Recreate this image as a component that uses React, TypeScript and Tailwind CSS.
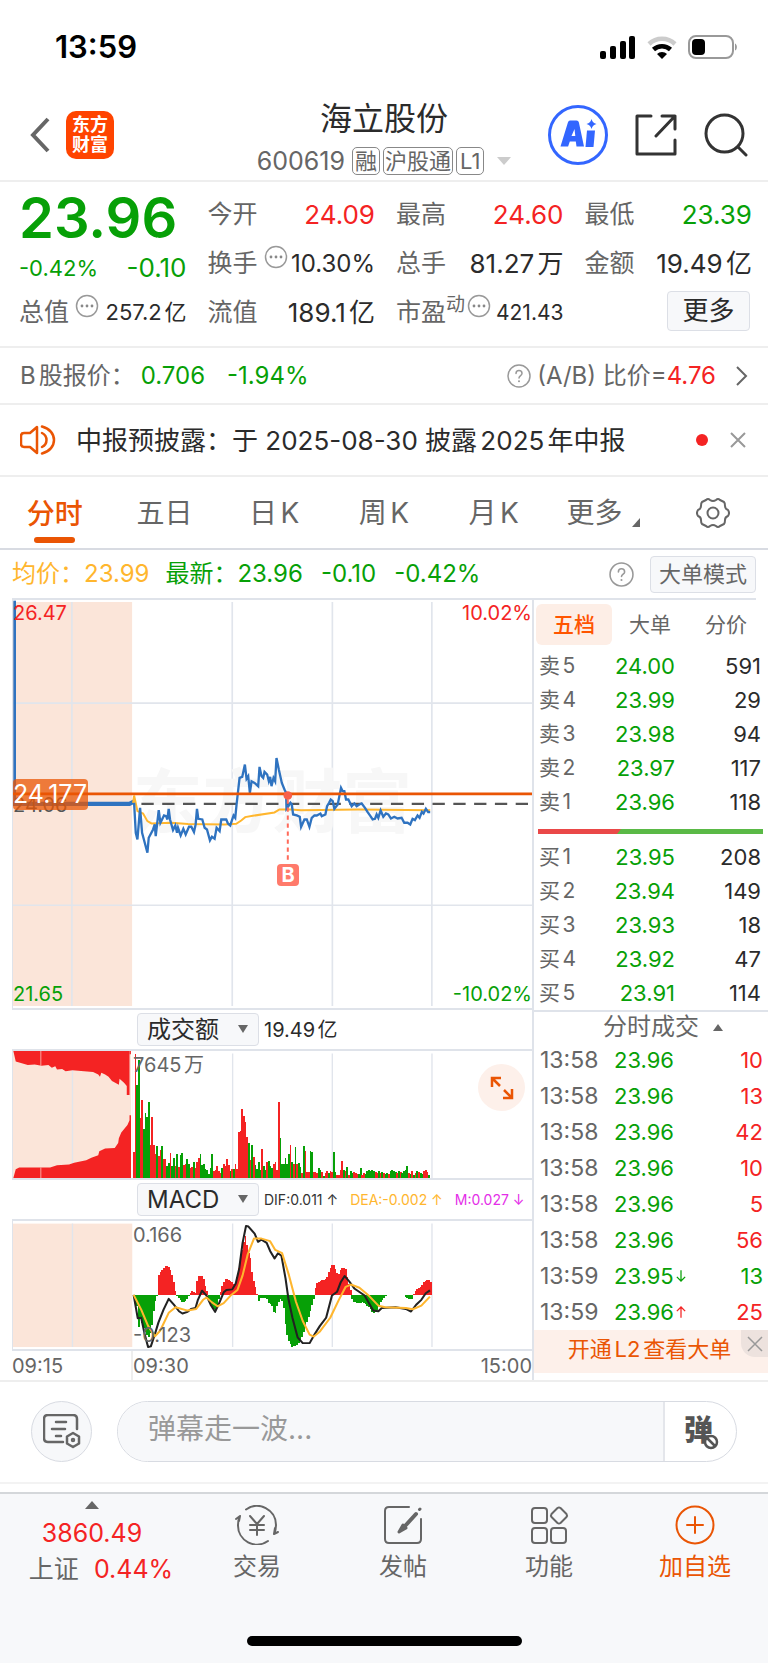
import type { ReactNode } from "react";

const asks = [
  ["卖5", "24.00", "591"],
  ["卖4", "23.99", "29"],
  ["卖3", "23.98", "94"],
  ["卖2", "23.97", "117"],
  ["卖1", "23.96", "118"],
];

const bids = [
  ["买1", "23.95", "208"],
  ["买2", "23.94", "149"],
  ["买3", "23.93", "18"],
  ["买4", "23.92", "47"],
  ["买5", "23.91", "114"],
];

const trades = [
  { time: "13:58", price: "23.96", vol: "10", side: "buy" },
  { time: "13:58", price: "23.96", vol: "13", side: "buy" },
  { time: "13:58", price: "23.96", vol: "42", side: "buy" },
  { time: "13:58", price: "23.96", vol: "10", side: "buy" },
  { time: "13:58", price: "23.96", vol: "5", side: "buy" },
  { time: "13:58", price: "23.96", vol: "56", side: "buy" },
  { time: "13:59", price: "23.95", vol: "13", side: "sell", arrow: "down" },
  { time: "13:59", price: "23.96", vol: "25", side: "buy", arrow: "up" },
];

const priceLine =
  "28,190 33,280 38,300 46,205 52,280 60,310 68,340 72,295 85,270 90,255 93,290 102,212 107,250 118,228 124,230 128,240 132,208 136,240 145,272 152,258 157,280 160,265 168,288 176,268 183,285 193,262 200,262 208,278 213,255 217,208 221,238 233,240 240,265 247,270 256,303 262,292 270,298 276,265 285,275 290,240 305,240 310,252 317,258 323,240 327,228 332,235 336,195 345,115 353,112 361,75 366,118 371,110 376,160 381,125 390,130 401,140 405,82 411,110 416,115 420,97 428,105 433,125 437,112 441,140 447,115 452,125 456,55 463,90 472,130 480,150 485,160 486,208 492,200 498,190 502,195 506,225 517,228 526,232 530,262 540,240 547,240 555,262 562,235 570,228 577,228 588,222 592,230 603,225 608,200 614,190 619,180 625,185 630,208 640,195 650,145 655,155 660,155 665,180 672,180 682,200 690,192 697,200 705,195 712,192 722,205 730,218 740,232 745,240 752,238 757,225 762,235 769,213 777,232 785,222 792,225 800,237 810,232 820,237 832,235 840,250 850,250 858,255 865,238 872,242 880,228 886,235 893,217 898,222 905,208 912,218 918,218";

const averageLine =
  "25,190 28,168 38,215 55,222 68,245 80,252 140,250 190,254 300,255 335,253 350,243 362,233 385,229 450,219 465,210 500,210 530,212 700,210 918,212";

// one entry per minute: r = up, g = down, followed by the bar height
const volumes =
  "r80 r381 g285 g360 r185 r240 g150 g198 g187 g232 r100 r188 r100 r75 g98 r68 r85 g98 r57 r57 g38 g45 r78 g38 g62 r36 g74 r34 g70 g78 r40 r43 g58 g42 r30 r34 g50 r30 r50 r62 g74 g40 g44 g28 g26 g12 g30 g72 r22 r24 r36 r20 r14 g30 r42 r38 r57 r40 g22 r28 g28 r42 r28 r140 r143 r210 r190 r170 r126 g106 r56 g102 r65 g40 g28 g50 g25 r88 g38 g24 r50 g52 g38 g30 r44 r50 r24 r234 g122 g42 g42 g60 g44 g74 r100 g48 r42 g95 r42 g46 g34 r14 g98 r82 r18 r18 g82 g80 r18 r18 r16 g30 g24 r18 g6 r14 r20 g14 r20 r18 g80 g18 r10 r10 r24 r52 g26 r20 g34 r10 g22 g16 r18 r14 r12 g12 g30 r8 r14 g12 g20 g24 g22 g24 g22 r18 r14 g20 r14 g18 r14 g12 g16 r12 g20 g24 g22 g18 r16 g20 r18 g16 g20 g26 g38 r16 g12 r22 g10 r14 g20 r18 g16 g12 r22 r24 r18 g10".split(
    " "
  );

const macdOutline: [number, number][] = [
  [386, 360], [400, 400], [402, 465], [408, 430], [420, 470], [432, 490], [440, 470], [445, 420], [450, 385], [457, 360],
  [460, 300], [470, 285], [480, 270], [493, 275], [500, 300], [505, 320], [512, 360], [525, 375], [532, 385], [545, 370],
  [550, 360], [558, 348], [568, 355], [572, 320], [578, 302], [590, 300], [595, 325], [602, 350], [605, 365], [612, 390],
  [625, 408], [632, 395], [637, 365], [642, 345], [648, 325], [655, 310], [668, 315], [678, 325], [685, 330], [690, 300],
  [700, 240], [712, 178], [716, 178], [720, 230], [727, 235], [731, 280], [738, 320], [745, 345], [749, 366], [753, 383],
  [757, 370], [775, 368], [782, 385], [790, 390], [797, 418], [803, 412], [807, 385], [818, 370], [825, 400], [832, 470],
  [838, 500], [850, 520], [862, 515], [872, 505], [885, 470], [900, 420], [912, 375], [916, 345], [920, 325], [930, 318],
  [950, 310], [955, 290], [965, 268], [972, 270], [978, 290], [985, 295], [993, 277], [1005, 280], [1010, 310], [1019, 345],
  [1023, 370], [1028, 380], [1040, 387], [1055, 382], [1070, 395], [1085, 415], [1095, 410], [1105, 385], [1115, 370], [1125, 360],
  [1175, 361], [1185, 372], [1198, 373], [1203, 358], [1210, 342], [1225, 335], [1232, 322], [1243, 312], [1257, 325],
];

const difLine =
  "388,360 400,432 410,430 420,480 430,520 438,518 450,480 460,445 475,405 490,372 505,390 520,410 530,417 545,412 555,403 568,400 575,375 587,347 600,362 612,390 625,412 635,390 650,352 658,345 675,343 685,325 695,280 705,200 715,148 722,150 740,172 750,197 760,190 775,200 785,225 798,248 808,232 818,240 830,310 838,370 850,430 865,490 880,508 900,508 915,480 930,455 948,430 965,362 980,350 990,322 1002,302 1015,318 1030,340 1060,362 1085,408 1100,410 1110,400 1150,398 1180,403 1195,411 1210,390 1225,375 1238,355 1250,346";

const deaLine =
  "388,360 410,405 430,455 450,487 465,470 490,415 510,398 545,408 570,403 590,375 600,368 615,382 632,395 650,385 670,362 690,345 705,300 720,235 738,187 760,187 785,195 800,222 820,232 840,300 860,380 880,440 900,482 912,488 930,472 960,430 985,375 1005,335 1020,328 1045,338 1070,360 1100,393 1120,398 1180,400 1200,404 1225,393 1250,365";

const BAR = 4.85;

function macdAt(x: number) {
  for (let i = 1; i < macdOutline.length; i++) {
    const [x0, y0] = macdOutline[i - 1];
    const [x1, y1] = macdOutline[i];
    if (x <= x1) return y0 + ((y1 - y0) * (x - x0)) / (x1 - x0);
  }
  return 360;
}

function Dots({ className = "" }: { className?: string }) {
  return (
    <svg viewBox="0 0 24 24" className={`h-6 w-6 shrink-0 self-start ${className}`} fill="none" stroke="#999" strokeWidth="1.5">
      <circle cx="12" cy="12" r="10.5" />
      <g fill="#888" stroke="none">
        <circle cx="7" cy="12" r="1.4" />
        <circle cx="12" cy="12" r="1.4" />
        <circle cx="17" cy="12" r="1.4" />
      </g>
    </svg>
  );
}

function Help({ className }: { className: string }) {
  return (
    <svg viewBox="0 0 24 24" className={className} fill="none" stroke="#999" strokeWidth="1.5">
      <circle cx="12" cy="12" r="11" />
      <path d="M9 9.5c0-4 6-4 6 0 0 2-3 2.200-3 4.500" strokeLinecap="round" />
      <circle cx="12" cy="17.200" r="1" fill="#999" stroke="none" />
    </svg>
  );
}

function Stat({ label, icon, value, color = "text-[#2b2b2b]", size = "text-[26px]" }: {
  label: ReactNode;
  icon?: ReactNode;
  value: string;
  color?: string;
  size?: string;
}) {
  return (
    <div className="flex h-[49px] items-center justify-between whitespace-nowrap">
      <div className="flex items-center text-[25px] text-[#666]">
        <span>{label}</span>
        {icon}
      </div>
      <span className={`${size} ${color}`}>{value}</span>
    </div>
  );
}

function Header() {
  return (
    <header className="border-b-2 border-[#eee]">
      <div className="flex h-[90px] items-center justify-between pt-1 pr-[30px] pl-[55px]">
        <span className="text-[31px] font-semibold text-black">13:59</span>
        <div className="flex items-center gap-[11px]">
          <svg viewBox="0 0 36 23" className="h-[23px] w-9">
            <rect x="0" y="15" width="6" height="8" rx="2" />
            <rect x="10" y="10" width="6" height="13" rx="2" />
            <rect x="20" y="5" width="6" height="18" rx="2" />
            <rect x="29" y="0" width="6" height="23" rx="2" />
          </svg>
          <svg viewBox="0 0 30 23" className="h-[23px] w-[30px]" fill="none" strokeWidth="4.500">
            <path d="M2 8a19 19 0 0 1 26 0" stroke="#ccc" />
            <path d="M6.500 13.500a12.500 12.500 0 0 1 17 0" stroke="#000" />
            <path d="M10 18a7 7 0 0 1 10 0l-5 5z" fill="#000" stroke="none" />
          </svg>
          <svg viewBox="0 0 50 24" className="h-6 w-[50px]" fill="none">
            <rect x="1" y="1" width="44" height="22" rx="7" stroke="#999" strokeWidth="2" />
            <rect x="4" y="4" width="13" height="16" rx="4" fill="#000" />
            <path d="M47 8.500c2.500 1 2.500 6 0 7z" fill="#999" />
          </svg>
        </div>
      </div>
      <div className="flex h-[90px] items-center px-5">
        <div className="flex flex-1 items-center gap-4">
          <button aria-label="返回" className="ml-[10px]">
            <svg viewBox="0 0 20 36" className="h-9 w-5" fill="none" stroke="#666" strokeWidth="4">
              <path d="M18 2L3 18l15 16" />
            </svg>
          </button>
          <div className="flex h-12 w-12 flex-col items-center justify-center rounded-[10px] bg-[#ff4400] text-[18px] leading-5 font-bold text-white">
            <span>东方</span>
            <span>财富</span>
          </div>
        </div>
        <div className="flex flex-col items-center pt-1">
          <h1 className="text-[32px] leading-10 text-[#2b2b2b]">海立股份</h1>
          <div className="mt-2 flex items-center gap-[3px] text-[22px] leading-[26px] text-[#666]">
            <span className="mr-1 text-[25px]">600619</span>
            <span className="rounded-[5px] border border-[#888] px-[2px]">融</span>
            <span className="rounded-[5px] border border-[#888] px-[1px]">沪股通</span>
            <span className="rounded-[5px] border border-[#888] px-[3px]">L1</span>
            <svg viewBox="0 0 14 8" className="ml-[10px] h-2 w-[14px]" fill="#ccc">
              <path d="M0 0h14L7 8z" />
            </svg>
          </div>
        </div>
        <div className="flex flex-1 items-center justify-end gap-[27px]">
          <button aria-label="Ai">
            <svg viewBox="0 0 60 60" className="h-[60px] w-[60px]" fill="none">
              <circle cx="30" cy="30" r="28.500" stroke="#3366ff" strokeWidth="3" />
              <path d="M22 15.500h6.500q2 0 2.400 2L36 41.500h-7.500l-.7-5h-6l-1.700 5H12.500l7.400-24q.6-2 2.100-2zM23.500 31h3.800l-.8-7z" fill="#3366ff" fillRule="evenodd" />
              <path d="M39 25.500h8l-1.500 16.500h-8z" fill="#3366ff" />
              <path d="M43.500 14c1 3 2 4 5 5-3 1-4 2-5 5-1-3-2-4-5-5 3-1 4-2 5-5z" fill="#3366ff" />
            </svg>
          </button>
          <button aria-label="分享">
            <svg viewBox="0 0 42 42" className="h-[42px] w-[42px]" fill="none" stroke="#333" strokeWidth="3" strokeLinejoin="round" strokeLinecap="round">
              <path d="M16 2H2v38h38V26M27 2h13v13M40 2L21 22" />
            </svg>
          </button>
          <button aria-label="搜索">
            <svg viewBox="0 0 44 44" className="h-11 w-11" fill="none" stroke="#333" strokeWidth="3" strokeLinecap="round">
              <circle cx="20.500" cy="20.500" r="18.500" />
              <path d="M34 34l8 8" />
            </svg>
          </button>
        </div>
      </div>
    </header>
  );
}

function Quote() {
  return (
    <section className="grid h-[166px] grid-cols-4 gap-x-[21px] border-b-2 border-[#eee] pt-2 pr-4 pl-[19px]">
      <div>
        <div className="flex h-[56px] items-center text-[56px] font-semibold text-[#07a007]">23.96</div>
        <div className="flex h-[42px] items-end justify-between pb-1 leading-8 text-[#07a007]">
          <span className="text-[22px]">-0.42%</span>
          <span className="text-[26px]">-0.10</span>
        </div>
        <Stat label="总值" icon={<Dots className="ml-[6px]" />} value="257.2亿" size="text-[22px]" />
      </div>
      <div>
        <Stat label="今开" value="24.09" color="text-[#f42323]" />
        <Stat label="换手" icon={<Dots className="ml-[6px]" />} value="10.30%" size="text-[24px]" />
        <Stat label="流值" value="189.1亿" />
      </div>
      <div>
        <Stat label="最高" value="24.60" color="text-[#f42323]" />
        <Stat label="总手" value="81.27万" />
        <Stat
          label={<>市盈<sup className="text-[19px]">动</sup></>}
          icon={<Dots className="ml-[2px]" />}
          value="421.43"
          size="text-[21px]"
        />
      </div>
      <div>
        <Stat label="最低" value="23.39" color="text-[#07a007]" />
        <Stat label="金额" value="19.49亿" />
        <div className="flex h-[49px] items-center justify-end pr-[2px] pb-1">
          <button className="h-10 w-[83px] rounded-[4px] border border-[#dcdfe6] bg-[#f7f8fa] text-[26px] leading-9 text-[#2b2b2b]">
            更多
          </button>
        </div>
      </div>
    </section>
  );
}

function Notices() {
  return (
    <>
      <a href="#b-share" className="flex h-[57px] items-center border-b-2 border-[#eee] px-5 text-[24px] whitespace-nowrap text-[#666]">
        <span>B股报价：</span>
        <span className="ml-[6px] text-[#07a007]">0.706</span>
        <span className="ml-[22px] text-[#07a007]">-1.94%</span>
        <Help className="mr-[6px] ml-auto h-6 w-6" />
        <span>
          (A/B) 比价=<span className="text-[#f42323]">4.76</span>
        </span>
        <svg viewBox="0 0 12 20" className="ml-5 h-5 w-3" fill="none" stroke="#666" strokeWidth="2">
          <path d="M1 1l9 9-9 9" />
        </svg>
      </a>
      <div className="flex h-[72px] items-center border-b-2 border-[#eee] px-5 text-[26px] whitespace-nowrap text-[#2b2b2b]">
        <svg viewBox="0 0 36 30" className="mr-5 h-[30px] w-9" fill="none" stroke="#ea5504" strokeWidth="2.500" strokeLinejoin="round">
          <path d="M17 2v26l-7-6H4q-3 0-3-3v-8q0-3 3-3h6z" />
          <path d="M22 8c6 3 6 11 0 14M22 1.500c16 4 16 23 0 27" strokeLinecap="round" />
        </svg>
        <span>中报预披露：于 2025-08-30 披露2025年中报</span>
        <span className="ml-auto h-3 w-3 rounded-full bg-[#f42323]" />
        <button aria-label="关闭" className="mr-[2px] ml-[22px]">
          <svg viewBox="0 0 16 16" className="h-4 w-4" fill="none" stroke="#999" strokeWidth="2">
            <path d="M1 1l14 14M15 1L1 15" />
          </svg>
        </button>
      </div>
    </>
  );
}

function Tabs() {
  return (
    <nav className="grid h-[73px] grid-cols-7 border-b-2 border-[#d8dbe2] text-[28px] text-[#666]">
      <button className="flex flex-col items-center pt-4 font-medium text-[#ea5504]">
        <span className="leading-[42px]">分时</span>
        <span className="mt-[2px] h-[6px] w-[41px] rounded-full bg-[#ea5504]" />
      </button>
      <button>五日</button>
      <button>日K</button>
      <button>周K</button>
      <button>月K</button>
      <button className="flex items-center justify-center gap-[10px]">
        更多
        <svg viewBox="0 0 8 9" className="mt-5 h-[9px] w-2" fill="#666">
          <path d="M8 0v9H0z" />
        </svg>
      </button>
      <button aria-label="设置" className="flex items-center justify-center">
        <svg viewBox="0 0 34 32" className="h-8 w-[34px]" fill="none" stroke="#666" strokeWidth="2" strokeLinejoin="round">
          <path d="M10 3q2-2 4 0 3 2 6 0 2-2 4 0l4 2q1 1 1 4 0 3 3 4 2 3 0 6-3 1-3 4 0 3-1 4l-4 2q-2 2-4 0-3-2-6 0-2 2-4 0l-4-2q-1-1-1-4 0-3-3-4-2-3 0-6 3-1 3-4 0-3 1-4z" />
          <circle cx="17" cy="16" r="5.500" />
        </svg>
      </button>
    </nav>
  );
}

function PriceChart() {
  return (
    <div className="relative h-[410px] border-b-2 border-l border-[#dfe3ea] text-[20px] leading-6">
      <svg viewBox="0 0 1560 1227" preserveAspectRatio="none" className="h-full w-full" fill="none">
        <rect y="6" width="358" height="1215" fill="#fbe5d9" />
        <g stroke="#e1e5ec" strokeWidth="5">
          <path d="M177 6v1215M659 6v1215M960 6v1215M1259 6v1215M0 310h1560M0 918h1560" />
        </g>
        <text x="360" y="684" fontSize="210" fontWeight="700" fill="#f7f7f7">
          东方财富
        </text>
        <g transform="translate(336 420)">
          <path d="M50 193h1174" stroke="#555" strokeWidth="7" strokeDasharray="37 25.500" />
          <path d="M-336 193H14l14-7" stroke="#2f73c0" strokeWidth="13" />
          <path d="M-331-418v611" stroke="#2f73c0" strokeWidth="8" />
          <polyline points={averageLine} stroke="#ffb62e" strokeWidth="6" />
          <polyline points={priceLine} stroke="#2f73c0" strokeWidth="7" />
          <path d="M-336 163h1560" stroke="#ea5504" strokeWidth="8" />
          <path d="M490 180v190" stroke="#ff6a5a" strokeWidth="6" strokeDasharray="13 11" />
          <circle cx="490" cy="168" r="13" fill="#f8604a" />
        </g>
      </svg>
      <span className="absolute top-[1px] left-0 text-[#f42323]">26.47</span>
      <span className="absolute top-[1px] right-0 text-[#f42323]">10.02%</span>
      <span className="absolute bottom-[2px] left-0 text-[#07a007]">21.65</span>
      <span className="absolute right-0 bottom-[2px] text-[#07a007]">-10.02%</span>
      <span className="absolute top-[193px] left-0 text-[#555]">24.06</span>
      <span className="absolute top-[179px] left-0 h-[31px] rounded-[4px] bg-[#ea5504]/75 pr-[1px] text-[25px] leading-[31px] text-white">
        24.177
      </span>
      <span className="absolute top-[264px] left-[264px] flex h-[22px] w-[22px] items-center justify-center rounded-[4px] bg-[#ff7a6b] text-[20px] font-bold text-white">
        B
      </span>
    </div>
  );
}

function IndicatorSelect({ label, value }: { label: string; value: string }) {
  return (
    <label className="relative ml-[125px] block shrink-0">
      <select
        aria-label={label}
        defaultValue={value}
        className="block h-[33px] w-[122px] appearance-none rounded-[4px] border border-[#dcdfe6] bg-[#f7f8fa] pl-[9px] text-[24px] leading-[30px] text-[#2b2b2b]"
      >
        <option>{value}</option>
      </select>
      <svg viewBox="0 0 10 8" className="pointer-events-none absolute top-3 right-[11px] h-2 w-[10px]" fill="#666">
        <path d="M0 0h10L5 8z" />
      </svg>
    </label>
  );
}

function VolumeChart() {
  return (
    <>
      <div className="flex h-[39px] items-center gap-[5px] text-[20px] text-[#2b2b2b]">
        <IndicatorSelect label="指标一" value="成交额" />
        <span>19.49亿</span>
      </div>
      <div className="relative h-[131px] border-y-2 border-l border-[#dfe3ea]">
        <svg viewBox="37 133 1510 389" preserveAspectRatio="none" className="h-full w-full">
          <rect x="37" y="133" width="347" height="389" fill="#fbe5d9" />
          <path d="M210 141v381M676 141v381M966 141v381M1256 141v381" stroke="#e1e5ec" strokeWidth="4" />
          <g fill="#f42323">
            <path d="M38 133L45 165L60 170L80 176L100 174L120 178L140 176L150 184L160 180L165 190L180 188L190 195L210 192L235 194L270 197L285 205L290 212L294 200L305 205L315 212L325 225L345 236L347 218L360 230L368 240V268H376V133z" />
            <path d="M376 133h4v10h-4z" />
            <path d="M38 522L45 495L55 490H145L165 483L200 481L215 475L250 468L265 460L285 452L288 440L305 432L333 430L343 415L345 400L352 383L370 360L376 345V330H381V522z" />
          </g>
          <path d="M118 133v45M118 490v32" stroke="#fbe5d9" strokeWidth="2" />
          <path d="M382 133v389" stroke="#fff" strokeWidth="3" />
          <g shapeRendering="crispEdges">
            {volumes.map((v, i) => (
              <rect
                key={i}
                x={386 + i * BAR}
                y={522 - Number(v.slice(1))}
                width={BAR + 0.5}
                height={Number(v.slice(1))}
                fill={v[0] === "r" ? "#f42323" : "#07a007"}
              />
            ))}
          </g>
        </svg>
        <span className="absolute top-[2px] left-[120px] text-[20px] leading-6 text-[#666]">7645万</span>
        <button
          aria-label="全屏"
          className="absolute top-[13px] right-[7px] flex h-[47px] w-[47px] items-center justify-center rounded-full bg-[#fdf0ea]"
        >
          <svg viewBox="0 0 24 24" className="h-6 w-6" fill="none" stroke="#ea5504" strokeWidth="2.500">
            <path d="M2 11V2h9M2 2l8 8M22 13v9h-9M22 22l-8-8" />
          </svg>
        </button>
      </div>
    </>
  );
}

function MacdChart() {
  const bars = [];
  for (let x = 386; x < 1254; x += BAR) {
    const y = macdAt(x + BAR / 2);
    bars.push(
      <rect
        key={x}
        x={x}
        y={Math.min(y, 360)}
        width={BAR + 0.5}
        height={Math.abs(y - 360)}
        fill={y < 360 ? "#f42323" : "#07a007"}
      />
    );
  }
  return (
    <>
      <div className="flex h-[39px] items-center text-[14px] whitespace-nowrap">
        <IndicatorSelect label="指标二" value="MACD" />
        <span className="ml-[5px] text-[#333]">DIF:0.011 ↑</span>
        <span className="ml-3 text-[#ffb62e]">DEA:-0.002 ↑</span>
        <span className="ml-3 text-[#e42ee8]">M:0.027 ↓</span>
      </div>
      <div className="relative h-[132px] border-y-2 border-l border-[#dfe3ea] text-[20px] leading-6 text-[#666]">
        <svg viewBox="37 133 1510 393" preserveAspectRatio="none" className="h-full w-full" fill="none">
          <rect x="37" y="141" width="347" height="379" fill="#fbe5d9" />
          <path d="M210 141v379M676 141v379M966 141v379M1256 141v379" stroke="#e1e5ec" strokeWidth="4" />
          <g shapeRendering="crispEdges">{bars}</g>
          <polyline points={difLine} stroke="#222" strokeWidth="6" strokeLinejoin="round" />
          <polyline points={deaLine} stroke="#ffb62e" strokeWidth="6" strokeLinejoin="round" />
        </svg>
        <span className="absolute top-[2px] left-[120px]">0.166</span>
        <span className="absolute bottom-[2px] left-[120px]">-0.123</span>
      </div>
      <div className="flex h-[29px] items-center text-[20px] text-[#666]">
        <span className="h-full w-[121px] border-r-2 border-[#eee]">09:15</span>
        <span className="h-full">09:30</span>
        <span className="ml-auto h-full">15:00</span>
      </div>
    </>
  );
}

function Levels({ rows }: { rows: string[][] }) {
  return (
    <table className="w-full table-fixed text-[22px]">
      <tbody>
        {rows.map(([name, price, vol]) => (
          <tr key={name} className="h-[34px] leading-[34px]">
            <td className="w-[60px] pl-[5px] text-[21px] text-[#666]">{name}</td>
            <td className="w-[81px] text-right text-[#07a007]">{price}</td>
            <td className="pr-[7px] text-right text-[#2b2b2b]">{vol}</td>
          </tr>
        ))}
      </tbody>
    </table>
  );
}

function OrderBook() {
  return (
    <aside className="w-[236px] shrink-0 border-l-2 border-[#dfe3ea]">
      <div className="grid h-[45px] grid-cols-3 pt-1 pr-1 pl-[2px] text-[21px] text-[#666]">
        <button className="rounded-[6px] bg-[#fdeee6] font-medium text-[#ff5500]">五档</button>
        <button>大单</button>
        <button>分价</button>
      </div>
      <div className="pt-1">
        <Levels rows={asks} />
      </div>
      <svg viewBox="0 0 225 5" preserveAspectRatio="none" className="mt-[10px] mb-[6px] ml-1 h-[5px] w-[225px]">
        <rect width="225" height="5" fill="#5ab946" />
        <path d="M0 0h83l-4 5H0z" fill="#ea4848" />
      </svg>
      <Levels rows={bids} />
      <button className="flex h-8 w-full items-center justify-center gap-[14px] border-t-2 border-[#dfe3ea] pl-6 text-[24px] text-[#666]">
        分时成交
        <svg viewBox="0 0 10 7" className="h-[7px] w-[10px]" fill="#666">
          <path d="M0 7h10L5 0z" />
        </svg>
      </button>
      <table className="w-full table-fixed text-[22px]">
        <tbody>
          {trades.map((t, i) => (
            <tr key={i} className="h-9 leading-9">
              <td className="w-[75px] pl-[6px] text-[23px] text-[#666]">{t.time}</td>
              <td className="w-[90px] pl-[5px] text-[#07a007]">
                <span className="flex items-center gap-[2px]">
                  {t.price}
                  {t.arrow && (
                    <svg viewBox="0 0 12 14" className="h-[14px] w-[10px] shrink-0" fill="none" stroke={t.arrow === "up" ? "#f42323" : "#07a007"} strokeWidth="1.500">
                      <path d={t.arrow === "up" ? "M6 14V1M1 6l5-5 5 5" : "M6 0v13M1 8l5 5 5-5"} />
                    </svg>
                  )}
                </span>
              </td>
              <td className={t.side === "buy" ? "pr-[5px] text-right text-[#f42323]" : "pr-[5px] text-right text-[#07a007]"}>
                {t.vol}
              </td>
            </tr>
          ))}
        </tbody>
      </table>
      <div className="relative h-[43px] bg-[#fdf0ea]">
        <a href="#l2" className="block pr-[3px] text-center text-[22px] leading-[39px] text-[#ea5504]">
          开通L2查看大单
        </a>
        <button aria-label="关闭广告" className="absolute top-0 right-0 flex h-[27px] w-[27px] items-center justify-center rounded-bl-[14px] bg-[#ede2de]">
          <svg viewBox="0 0 16 16" className="h-4 w-4" fill="none" stroke="#999" strokeWidth="1.500">
            <path d="M1 1l14 14M15 1L1 15" />
          </svg>
        </button>
      </div>
    </aside>
  );
}

function Comment() {
  return (
    <div className="flex h-[102px] items-center border-t-2 border-[#eee] px-[31px] pb-[2px]">
      <button aria-label="弹幕设置" className="mr-[25px] flex h-[61px] w-[61px] shrink-0 items-center justify-center rounded-full border border-[#d8dbe2] bg-[#f7f8fa]">
        <svg viewBox="0 0 38 35" className="h-[35px] w-[38px]" fill="none" stroke="#666" strokeWidth="2.500" strokeLinecap="round">
          <path d="M34 15V5q0-4-4-4H5Q1 1 1 5v19q0 4 4 4h15M13 8h10M9 15h13M13 22h5" />
          <path d="M30 19l6 3.500v7L30 33l-6-3.500v-7z" strokeLinejoin="round" />
          <circle cx="30" cy="26" r="1" />
        </svg>
      </button>
      <div className="flex h-[61px] flex-1 overflow-hidden rounded-full border border-[#d8dbe2]">
        <input
          aria-label="弹幕"
          placeholder="弹幕走一波..."
          className="min-w-0 flex-1 bg-[#f7f8fa] pb-1 pl-[30px] text-[28px] outline-none placeholder:text-[#999]"
        />
        <button aria-label="关闭弹幕" className="relative w-[73px] border-l-2 border-[#e4e6eb] pr-1 text-[29px] font-black text-[#555]">
          弹
          <svg viewBox="0 0 16 16" className="absolute right-[17px] bottom-[11px] h-4 w-4" fill="#fff" stroke="#555" strokeWidth="2.500">
            <circle cx="8" cy="8" r="6" />
            <path d="M4 4l8 8" />
          </svg>
        </button>
      </div>
    </div>
  );
}

function NavItem({ label, children, active = false }: { label: string; children: ReactNode; active?: boolean }) {
  return (
    <button className={active ? "flex flex-1 flex-col items-center pt-[11px] text-[#ea5504]" : "flex flex-1 flex-col items-center pt-[11px] text-[#666]"}>
      <svg viewBox="0 0 44 40" className="h-10 w-11" fill="none" stroke="currentColor" strokeWidth="2" strokeLinecap="round" strokeLinejoin="round">
        {children}
      </svg>
      <span className="mt-1 text-[24px] leading-9">{label}</span>
    </button>
  );
}

function BottomNav() {
  return (
    <footer className="border-t-2 border-[#d4d7da] bg-[#f7f8fa]">
      <div className="flex h-[142px]">
        <button className="flex w-[184px] flex-col items-center pt-[7px] text-[25px] text-[#f42323]">
          <svg viewBox="0 0 14 8" className="h-2 w-[14px]" fill="#666">
            <path d="M0 8h14L7 0z" />
          </svg>
          <span className="mt-[6px] leading-9">3860.49</span>
          <span className="pl-[18px] leading-9">
            <span className="mr-3 text-[#666]">上证</span>0.44%
          </span>
        </button>
        <NavItem label="交易">
          <path d="M11 4.500A19 19 0 0 1 41 20c0 3-.5 6-2 9M39 29l1-6M39 29l4-2M33 36A19 19 0 0 1 3 20c0-3 .5-6 2-9M5 11l-1 5M5 11l-4 3" />
          <path d="M15 11l7 8 7-8M22 19v11M15 20h14M15 25h14" />
        </NavItem>
        <NavItem label="发帖">
          <path d="M28 2H8Q4 2 4 6v28q0 4 4 4h28q4 0 4-4V14" />
          <path d="M35 9L24 21" strokeWidth="4" />
          <path d="M18 27l4-7 3 3zM38.500 4.500l.5-.5" strokeWidth="3" fill="currentColor" />
        </NavItem>
        <NavItem label="功能">
          <rect x="5" y="3" width="15" height="15" rx="3" />
          <rect x="5" y="23" width="15" height="15" rx="3" />
          <rect x="24" y="23" width="15" height="15" rx="3" />
          <path d="M30.500 3l-6 6q-1 1.500 0 3l6 6q1.500 1 3 0l6-6q1-1.500 0-3l-6-6q-1.500-1-3 0z" />
        </NavItem>
        <NavItem label="加自选" active>
          <circle cx="22" cy="20" r="18.500" />
          <path d="M14 20h16M22 12v16" />
        </NavItem>
      </div>
      <div className="flex h-7 justify-center">
        <div className="h-[10px] w-[275px] rounded-full bg-black" />
      </div>
    </footer>
  );
}

export default function App() {
  return (
    <div className="min-h-screen w-full bg-white font-['Inter','Noto_Sans_CJK_SC',sans-serif] [text-autospace:normal]">
      <Header />
      <Quote />
      <Notices />
      <Tabs />
      <div className="mx-3 flex h-[50px] items-center border-b-2 border-[#dfe3ea] text-[24px] whitespace-nowrap">
        <span className="text-[#ffb62e]">均价：23.99</span>
        <span className="ml-4 text-[#07a007]">最新：23.96</span>
        <span className="ml-[18px] text-[#07a007]">-0.10</span>
        <span className="ml-[18px] text-[#07a007]">-0.42%</span>
        <Help className="mr-4 ml-auto h-[25px] w-[25px]" />
        <button className="h-[37px] w-[106px] rounded-[4px] border border-[#dcdfe6] bg-[#f7f8fa] text-[22px] leading-8 text-[#666]">
          大单模式
        </button>
      </div>
      <main className="flex">
        <div className="min-w-0 flex-1 pl-3">
          <PriceChart />
          <VolumeChart />
          <MacdChart />
        </div>
        <OrderBook />
      </main>
      <Comment />
      <div className="h-[10px] border-t-2 border-[#f3f3f3]" />
      <BottomNav />
    </div>
  );
}
